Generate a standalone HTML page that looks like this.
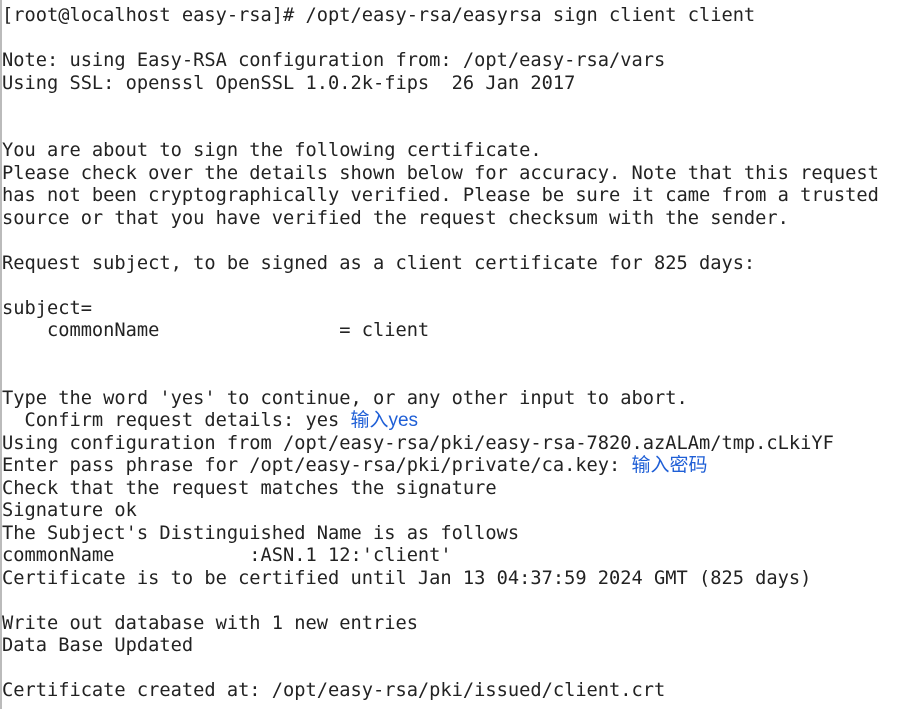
<!DOCTYPE html>
<html><head><meta charset="utf-8"><style>
html,body{margin:0;padding:0;background:#fff;width:911px;height:709px;overflow:hidden}
body{border-left:2px solid #bbb;box-sizing:border-box}
pre{margin:0;position:absolute;left:2px;top:5px;font-family:"DejaVu Sans Mono","Liberation Mono",monospace;font-size:18.68px;line-height:22.5px;color:#222}
.b{font-family:"Liberation Sans","Noto Sans CJK SC",sans-serif;color:#1f5fd6;font-size:19px}
</style></head><body><pre>[root@localhost easy-rsa]# /opt/easy-rsa/easyrsa sign client client

Note: using Easy-RSA configuration from: /opt/easy-rsa/vars
Using SSL: openssl OpenSSL 1.0.2k-fips  26 Jan 2017


You are about to sign the following certificate.
Please check over the details shown below for accuracy. Note that this request
has not been cryptographically verified. Please be sure it came from a trusted
source or that you have verified the request checksum with the sender.

Request subject, to be signed as a client certificate for 825 days:

subject=
    commonName                = client


Type the word 'yes' to continue, or any other input to abort.
  Confirm request details: yes <span class="b">输入yes</span>
Using configuration from /opt/easy-rsa/pki/easy-rsa-7820.azALAm/tmp.cLkiYF
Enter pass phrase for /opt/easy-rsa/pki/private/ca.key: <span class="b">输入密码</span>
Check that the request matches the signature
Signature ok
The Subject's Distinguished Name is as follows
commonName            :ASN.1 12:'client'
Certificate is to be certified until Jan 13 04:37:59 2024 GMT (825 days)

Write out database with 1 new entries
Data Base Updated

Certificate created at: /opt/easy-rsa/pki/issued/client.crt</pre></body></html>
